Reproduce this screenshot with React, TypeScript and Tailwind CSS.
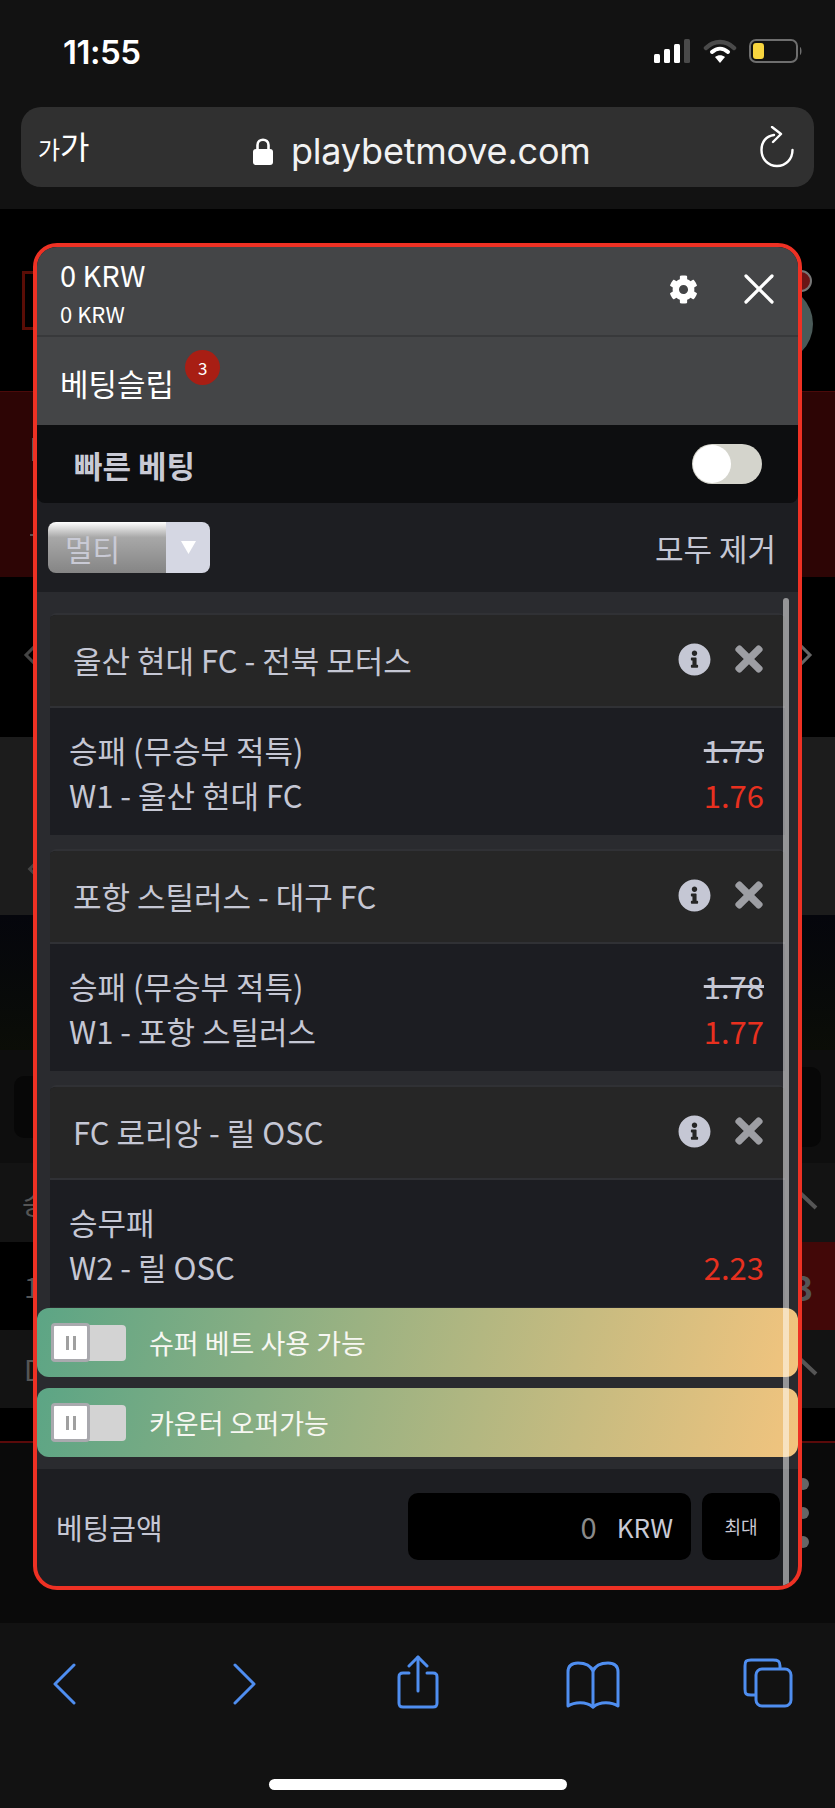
import { FaCog, FaInfoCircle, FaTimes } from 'react-icons/fa'

const KR = 'font-["Noto_Sans_CJK_KR","Noto_Sans",sans-serif]'

type Bet = {
  id: number
  match: string
  market: string
  pick: string
  oldOdds?: string
  odds: string
}

const bets: Array<Bet> = [
  { id: 1, match: '울산 현대 FC - 전북 모터스', market: '승패 (무승부 적특)', pick: 'W1 - 울산 현대 FC', oldOdds: '1.75', odds: '1.76' },
  { id: 2, match: '포항 스틸러스 - 대구 FC', market: '승패 (무승부 적특)', pick: 'W1 - 포항 스틸러스', oldOdds: '1.78', odds: '1.77' },
  { id: 3, match: 'FC 로리앙 - 릴 OSC', market: '승무패', pick: 'W2 - 릴 OSC', odds: '2.23' },
]

function StatusBar() {
  return (
    <div className="flex h-[107px] items-start justify-between pl-[63px] pr-[32px] pt-[31px]">
      <span className='font-["Inter",sans-serif] text-[33px] leading-[42px] font-semibold tracking-[-0.5px] text-white'>11:55</span>
      <div className="flex items-center gap-[12px] pt-[8px]">
        <svg width="37" height="24" viewBox="0 0 37 24">
          <rect x="0" y="15" width="6" height="9" rx="1.5" fill="#fff" />
          <rect x="10" y="10" width="6" height="14" rx="1.5" fill="#fff" />
          <rect x="20" y="5" width="6" height="19" rx="1.5" fill="#fff" />
          <rect x="30" y="0" width="6" height="24" rx="1.5" fill="#4a4a4a" />
        </svg>
        <svg width="34" height="24" viewBox="0 0 34 24" fill="none">
          <path d="M3 9 C11 1 23 1 31 9" stroke="#4a4a4a" strokeWidth="4.5" strokeLinecap="round" />
          <path d="M9 13 C14 8.5 20 8.5 25 13" stroke="#fff" strokeWidth="4" strokeLinecap="round" />
          <path d="M17 24 L12 18 C15 15.5 19 15.5 22 18 Z" fill="#fff" />
        </svg>
        <svg width="54" height="24" viewBox="0 0 54 24" fill="none">
          <rect x="1" y="1" width="47" height="22" rx="6" stroke="#6e6e6e" strokeWidth="2" />
          <rect x="4" y="4" width="11" height="16" rx="3" fill="#f8d53f" />
          <path d="M51 8 C53 9 53 15 51 16 Z" fill="#6e6e6e" />
        </svg>
      </div>
    </div>
  )
}

function UrlBar() {
  return (
    <div className="relative mx-[21px] flex h-[80px] items-center justify-between rounded-[20px] bg-[#303030] pl-[17px] pr-[20px]">
      <span className={`${KR} mb-[4px] flex items-end leading-none text-white`}>
        <span className="text-[24px]">가</span>
        <span className="text-[32px]">가</span>
      </span>
      <div className="absolute left-[232px] top-[26px] flex items-center gap-[18px]">
        <svg width="20" height="28" viewBox="0 0 20 28">
          <path d="M4.5 13 V8 C4.5 1 15.5 1 15.5 8 V13" fill="none" stroke="#fff" strokeWidth="2.6" />
          <rect x="0" y="12" width="20" height="16" rx="3" fill="#fff" />
        </svg>
        <span className='font-["Inter",sans-serif] text-[36px] leading-none tracking-[-0.2px] text-[#f2f2f2]'>playbetmove.com</span>
      </div>
      <svg width="34" height="42" viewBox="0 0 34 42" fill="none" stroke="#fff" strokeWidth="2.4" strokeLinecap="round" strokeLinejoin="round">
        <path d="M14 9 C6 10 1.500 16 1.500 24 C1.500 33 8 40 17 40 C26 40 32.500 33 32.500 24" />
        <path d="M12 1 L21 8 L13 16" />
      </svg>
    </div>
  )
}

function RowChevron() {
  return (
    <svg width="40" height="22" viewBox="0 0 40 22" fill="none" stroke="#555" strokeWidth="4" className="mb-[8px]">
      <path d="M2 20 L20 3 L38 20" />
    </svg>
  )
}

function Backdrop() {
  return (
    <div className="flex flex-1 flex-col">
      <div className="relative h-[182px] bg-black">
        <div className="absolute left-[22px] top-[62px] h-[59px] w-[20px] border-[3px] border-[#5a0d06]" />
        <div className="absolute left-[735px] top-[76px] h-[78px] w-[78px] rounded-full bg-[#4a5a58]" />
        <div className="absolute left-[790px] top-[61px] h-[22px] w-[22px] rounded-full border-2 border-[#777] bg-[#6a1515]" />
      </div>
      <div className="relative h-[186px] border-t border-[#4b0a0a] bg-[#2d0505]">
        <div className="absolute left-[32px] top-[46px] h-[23px] w-[4px] bg-[#555]" />
        <div className="absolute left-[30px] top-[142px] h-[2px] w-[6px] bg-[#555]" />
      </div>
      <div className="relative h-[160px] bg-black">
        <div className="absolute left-[28px] top-[68px] h-[20px] w-[20px] rotate-45 border-[3px] border-[#444]" />
        <div className="absolute left-[788px] top-[68px] h-[20px] w-[20px] rotate-45 border-[3px] border-[#666]" />
      </div>
      <div className="relative h-[178px] bg-[#1c1c1c]">
        <div className="absolute left-[30px] top-[126px] h-[12px] w-[12px] rotate-45 border-[3px] border-[#444]" />
      </div>
      <div className="h-[135px] bg-gradient-to-b from-[#05060c] to-[#0b0d07]" />
      <div className="flex h-[113px] items-center justify-between bg-[#0e0e0e] px-[14px]">
        <div className="h-[62px] w-[60px] rounded-[10px] bg-[#070707]" />
        <div className="h-[80px] w-[60px] rounded-[10px] bg-[#070707]" />
      </div>
      <div className={`${KR} flex h-[79px] items-center justify-between bg-[#131313] pl-[22px] pr-[17px] text-[28px] text-[#555]`}>
        <span>승</span>
        <RowChevron />
      </div>
      <div className={`${KR} flex h-[88px] items-center justify-between pl-[24px] text-[28px] text-[#555]`}>
        <span>1</span>
        <div className="flex h-full w-[42px] items-center bg-[#420808] text-[34px] font-bold">3</div>
      </div>
      <div className={`${KR} flex h-[78px] items-center justify-between bg-[#131313] pl-[24px] pr-[17px] text-[28px] text-[#555]`}>
        <span>D</span>
        <RowChevron />
      </div>
      <div className="h-[33px] bg-black" />
      <div className="relative flex-1 border-t-2 border-[#5a0a0a] bg-[#0a0a0a]">
        <div className="absolute left-[797px] top-[35px] flex flex-col gap-[17px]">
          <div className="h-[12px] w-[12px] rounded-full bg-[#666]" />
          <div className="h-[12px] w-[12px] rounded-full bg-[#666]" />
          <div className="h-[12px] w-[12px] rounded-full bg-[#666]" />
        </div>
      </div>
    </div>
  )
}

function Toolbar() {
  return (
    <div className="flex h-[185px] flex-col bg-[#121212]">
      <div className="flex h-[156px] items-start pl-[53px] pt-[32px]">
        <svg width="23" height="42" viewBox="0 0 23 42" fill="none" stroke="#4f8ef0" strokeWidth="3" strokeLinecap="round" strokeLinejoin="round" className="mt-[8px]">
          <path d="M21 2 L2 21 L21 40" />
        </svg>
        <svg width="23" height="42" viewBox="0 0 23 42" fill="none" stroke="#4f8ef0" strokeWidth="3" strokeLinecap="round" strokeLinejoin="round" className="ml-[157px] mt-[8px]">
          <path d="M2 2 L21 21 L2 40" />
        </svg>
        <svg width="42" height="54" viewBox="0 0 42 54" fill="none" stroke="#4f8ef0" strokeWidth="3" strokeLinecap="round" strokeLinejoin="round" className="ml-[141px]">
          <path d="M12 18 H6 C3 18 2 19 2 22 V48 C2 51 3 52 6 52 H36 C39 52 40 51 40 48 V22 C40 19 39 18 36 18 H30" />
          <path d="M21 36 V2" />
          <path d="M12 11 L21 2 L30 11" />
        </svg>
        <svg width="54" height="48" viewBox="0 0 54 48" fill="none" stroke="#4f8ef0" strokeWidth="3" strokeLinecap="round" strokeLinejoin="round" className="ml-[127px] mt-[6px]">
          <path d="M27 10 C24 3 18 2 12 2 C5 2 2 5 2 11 V45 C8 41 20 40 27 46 C34 40 46 41 52 45 V11 C52 5 49 2 42 2 C36 2 30 3 27 10 Z" />
          <path d="M27 10 V46" />
        </svg>
        <svg width="50" height="50" viewBox="0 0 50 50" fill="none" stroke="#4f8ef0" strokeWidth="3" strokeLinejoin="round" className="ml-[123px] mt-[3px]">
          <path d="M13 37 H8 C3 37 2 36 2 31 V8 C2 3 3 2 8 2 H30 C35 2 37 3 37 8 V11" />
          <rect x="13" y="11" width="35" height="37" rx="6" />
        </svg>
      </div>
      <div className="mx-auto h-[11px] w-[298px] rounded-full bg-white" />
    </div>
  )
}

function BetCard({ bet }: { bet: Bet }) {
  return (
    <div className="h-[222px] shrink-0 overflow-hidden rounded-t-[6px] border-t-2 border-[#303135] bg-[#1c1d22]">
      <div className="flex h-[93px] items-center justify-between border-b-2 border-[#303135] bg-[#262626] pb-[3px] pl-[23px] pr-[16px]">
        <span className="text-[31px] leading-none text-[#c5c7d4]">{bet.match}</span>
        <div className="flex items-center gap-[18px]">
          <FaInfoCircle className="text-[33px] text-[#c5c7d4]" />
          <FaTimes className="text-[40px] text-[#9d9ea3]" />
        </div>
      </div>
      <div className="pl-[19px] pr-[21px] pt-[19px] text-[31px] leading-[45px] text-[#c5c7d4]">
        <div className="flex justify-between">
          <span>{bet.market}</span>
          {bet.oldOdds && <span className="line-through">{bet.oldOdds}</span>}
        </div>
        <div className="flex justify-between">
          <span>{bet.pick}</span>
          <span className="text-[#e8301f]">{bet.odds}</span>
        </div>
      </div>
    </div>
  )
}

function PromoStrip({ label }: { label: string }) {
  return (
    <div className="flex h-[69px] items-center rounded-[12px] bg-[linear-gradient(105deg,#5ca585,#f2c47e)] pl-[14px]">
      <div className="flex h-[36px] w-[75px] items-center rounded-[4px] bg-[#d3d3d3]">
        <div className="flex h-[39px] w-[39px] items-center justify-center gap-[4px] rounded-[4px] border-[3px] border-[#a9a9ae] bg-white">
          <span className="h-[14px] w-[3px] bg-[#a0a0a0]" />
          <span className="h-[14px] w-[3px] bg-[#a0a0a0]" />
        </div>
      </div>
      <span className="ml-[23px] text-[27px] leading-none text-[#f7f7f2]">{label}</span>
    </div>
  )
}

function BetSlip() {
  return (
    <div className={`${KR} absolute left-[33px] top-[243px] flex h-[1347px] w-[769px] flex-col overflow-hidden rounded-[24px] border-[4px] border-[#ee3124] bg-[#1d1e22]`}>
      <div className="flex h-[90px] shrink-0 items-center justify-between border-b-2 border-[#38393b] bg-[#444547] pl-[23px] pr-[23px]">
        <div className="text-white">
          <div className="text-[29px] leading-[40px]">0 KRW</div>
          <div className="mt-[3px] text-[22px] leading-[32px]">0 KRW</div>
        </div>
        <div className="flex items-center gap-[45px] pb-[4px]">
          <FaCog className="text-[29px] text-white" />
          <svg width="32" height="30" viewBox="0 0 32 30" fill="none" stroke="#fff" strokeWidth="3.2" strokeLinecap="round">
            <path d="M3 2 L29 28" />
            <path d="M29 2 L3 28" />
          </svg>
        </div>
      </div>
      <div className="flex h-[88px] shrink-0 items-start bg-[#444547] pl-[23px]">
        <span className="mt-[26px] text-[31px] leading-[40px] text-white">베팅슬립</span>
        <span className="ml-[11px] mt-[13px] flex h-[35px] w-[35px] items-center justify-center rounded-full bg-[#a81e14] text-[17px] text-white">3</span>
      </div>
      <div className="flex h-[78px] shrink-0 items-center justify-between rounded-b-[8px] bg-[#0d0e10] pl-[37px] pr-[36px]">
        <span className="text-[31px] leading-none font-bold text-[#c9cad5]">빠른 베팅</span>
        <div className="flex h-[40px] w-[70px] items-center rounded-full bg-[#d4d4cc] pl-[1px]">
          <div className="h-[38px] w-[38px] rounded-full bg-white" />
        </div>
      </div>
      <div className="flex h-[89px] shrink-0 items-center justify-between pl-[11px] pr-[22px]">
        <div className="flex h-[51px] w-[162px] overflow-hidden rounded-[8px]">
          <div className="flex w-[118px] items-center bg-gradient-to-b from-[#ffffff] via-[#a8a8a8] via-[30%] to-[#858585] pl-[17px] text-[30px] leading-none text-[#c9cad5]">멀티</div>
          <div className="flex w-[44px] items-center justify-center bg-[#d5d7e3]">
            <svg width="15" height="13" viewBox="0 0 15 13"><path d="M0 0 H15 L7.5 13 Z" fill="#fff" /></svg>
          </div>
        </div>
        <span className="text-[31px] leading-none text-[#c5c7d4]">모두 제거</span>
      </div>
      <div className="relative flex-1 overflow-hidden bg-[#2a2b2f]">
        <div className="flex flex-col gap-[14px] pl-[13px] pr-[13px] pt-[21px]">
          {bets.map((bet) => (
            <BetCard bet={bet} key={bet.id} />
          ))}
        </div>
        <div className="absolute bottom-[12px] left-0 right-0 flex flex-col gap-[11px] bg-[#2a2b2f]">
          <PromoStrip label="슈퍼 베트 사용 가능" />
          <PromoStrip label="카운터 오퍼가능" />
        </div>
      </div>
      <div className="flex h-[117px] shrink-0 items-start justify-between pl-[19px] pr-[18px] pt-[24px]">
        <span className="mt-[14px] text-[29px] leading-[40px] text-[#c5c7d4]">베팅금액</span>
        <div className="flex gap-[11px]">
          <div className="flex h-[67px] w-[283px] items-center justify-end rounded-[10px] bg-black pr-[18px]">
            <span className="mr-[20px] text-[29px] text-[#8a8a8a]">0</span>
            <span className="text-[26px] text-[#c9cad5]">KRW</span>
          </div>
          <div className="flex h-[67px] w-[78px] items-center justify-center rounded-[10px] bg-black text-[18px] text-[#c9cad5]">최대</div>
        </div>
      </div>
      {/* scrollbar sits on top of everything in the slip */}
      <div className="absolute bottom-0 left-[746px] top-[351px] w-[6px] rounded-t-full bg-white/50" />
    </div>
  )
}

export default function App() {
  return (
    <div className="relative flex h-[1808px] w-[835px] flex-col overflow-hidden bg-black">
      <div className="h-[209px] shrink-0 bg-[#121212]">
        <StatusBar />
        <UrlBar />
      </div>
      <Backdrop />
      <Toolbar />
      <BetSlip />
    </div>
  )
}
